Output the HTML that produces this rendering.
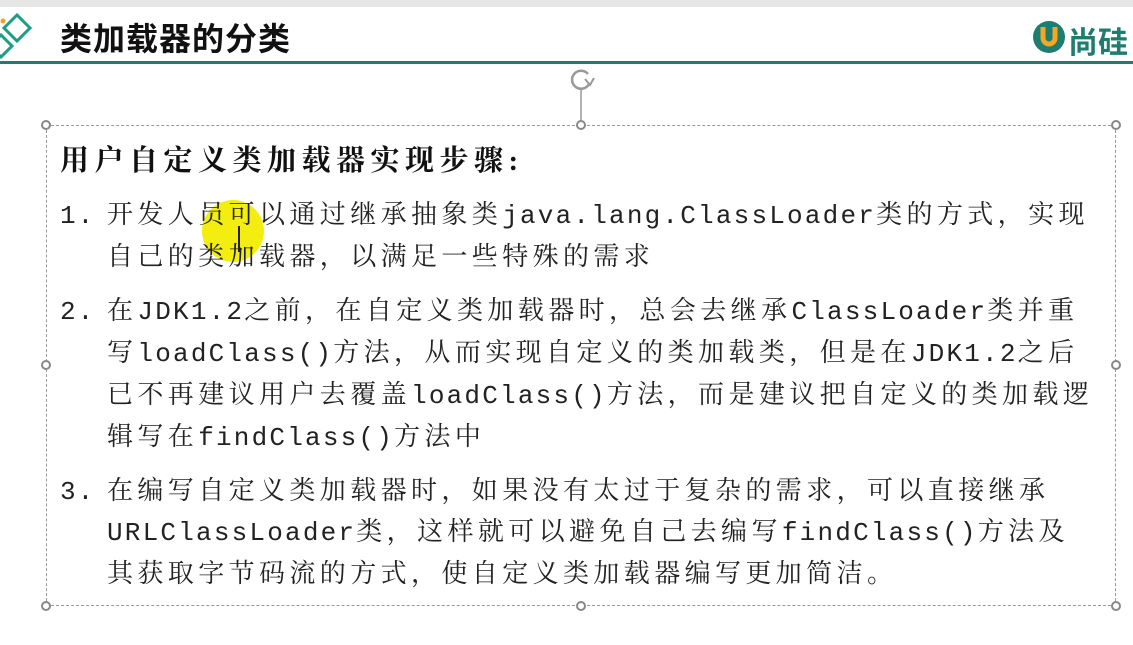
<!DOCTYPE html>
<html><head><meta charset="utf-8"><style>
body{margin:0;width:1133px;height:645px;background:#fff;position:relative;overflow:hidden;font-family:"Liberation Serif","Noto Serif CJK SC",serif;}
.topbar{position:absolute;left:0;top:0;width:1133px;height:7px;background:#e6e6e6;}
.title{position:absolute;left:60px;top:14px;font:bold 32px "Liberation Sans","Noto Sans CJK SC",sans-serif;color:#111;letter-spacing:1px;}
.line{position:absolute;left:0;top:61px;width:1133px;height:3px;background:#1f7d70;}
.box{position:absolute;left:46px;top:125px;width:1070px;height:481px;border:1px dashed #999;box-sizing:border-box;}
.h{position:absolute;width:10px;height:10px;border:2px solid #888;border-radius:50%;background:#fff;box-sizing:border-box;}
.t{position:absolute;font-size:26px;letter-spacing:4.4px;color:#222;white-space:nowrap;line-height:30px;}
.m{font-family:"Liberation Mono",monospace;letter-spacing:2.2px;}
.n{display:inline-block;width:47px;font-family:"Liberation Mono",monospace;letter-spacing:2px;}
.hd{position:absolute;left:60px;top:138px;font-size:29px;font-weight:bold;letter-spacing:5.5px;color:#111;white-space:nowrap;}
</style></head><body>
<div class="topbar"></div>
<svg style="position:absolute;left:0;top:8px" width="60" height="54"><polygon points="4,20 17,7 30,20 17,33" fill="none" stroke="#1f9c88" stroke-width="3"/><polygon points="-10,38 1,27 12,38 1,49" fill="none" stroke="#1f9c88" stroke-width="3"/><circle cx="3" cy="13" r="2.5" fill="#f0a020"/></svg>
<div class="title">类加载器的分类</div>
<svg style="position:absolute;left:1031px;top:19px" width="36" height="36"><circle cx="18" cy="18" r="16" fill="#1f7d70"/><path d="M12 8 V19 A6 6 0 0 0 24 19 V8" fill="none" stroke="#f5a623" stroke-width="5"/></svg>
<div style="position:absolute;left:1068px;top:18px;font:bold 30px 'Noto Sans CJK SC',sans-serif;color:#1f7d70;">尚硅</div>
<div class="line"></div>
<svg style="position:absolute;left:566px;top:64px" width="32" height="64"><path d="M22 10 A9 9 0 1 0 23 20" fill="none" stroke="#999" stroke-width="2.5"/><path d="M19 15 L24 21 L28 14" fill="none" stroke="#999" stroke-width="2"/><line x1="15" y1="25" x2="15" y2="56" stroke="#999" stroke-width="1.5"/></svg>
<div class="box"></div>
<div class="h" style="left:41px;top:120px"></div><div class="h" style="left:576px;top:120px"></div><div class="h" style="left:1111px;top:120px"></div>
<div class="h" style="left:41px;top:360px"></div><div class="h" style="left:1111px;top:360px"></div>
<div class="h" style="left:41px;top:601px"></div><div class="h" style="left:576px;top:601px"></div><div class="h" style="left:1111px;top:601px"></div>
<div style="position:absolute;left:202px;top:200px;width:62px;height:62px;border-radius:50%;background:#f4ee10;"></div>
<div class="hd">用户自定义类加载器实现步骤:</div>
<div class="t" style="left:60px;top:200px"><span class="n">1.</span>开发人员可以通过继承抽象类<span class="m">java.lang.ClassLoader</span>类的方式，实现</div>
<div class="t" style="left:107px;top:242px">自己的类加载器，以满足一些特殊的需求</div>
<div class="t" style="left:60px;top:296px"><span class="n">2.</span>在<span class="m">JDK1.2</span>之前，在自定义类加载器时，总会去继承<span class="m">ClassLoader</span>类并重</div>
<div class="t" style="left:107px;top:338px">写<span class="m">loadClass()</span>方法，从而实现自定义的类加载类，但是在<span class="m">JDK1.2</span>之后</div>
<div class="t" style="left:107px;top:380px">已不再建议用户去覆盖<span class="m">loadClass()</span>方法，而是建议把自定义的类加载逻</div>
<div class="t" style="left:107px;top:422px">辑写在<span class="m">findClass()</span>方法中</div>
<div class="t" style="left:60px;top:476px"><span class="n">3.</span>在编写自定义类加载器时，如果没有太过于复杂的需求，可以直接继承</div>
<div class="t" style="left:107px;top:517px"><span class="m">URLClassLoader</span>类，这样就可以避免自己去编写<span class="m">findClass()</span>方法及</div>
<div class="t" style="left:107px;top:559px">其获取字节码流的方式，使自定义类加载器编写更加简洁。</div>
<div style="position:absolute;left:238px;top:226px;width:2px;height:26px;background:#222"></div>
</body></html>
